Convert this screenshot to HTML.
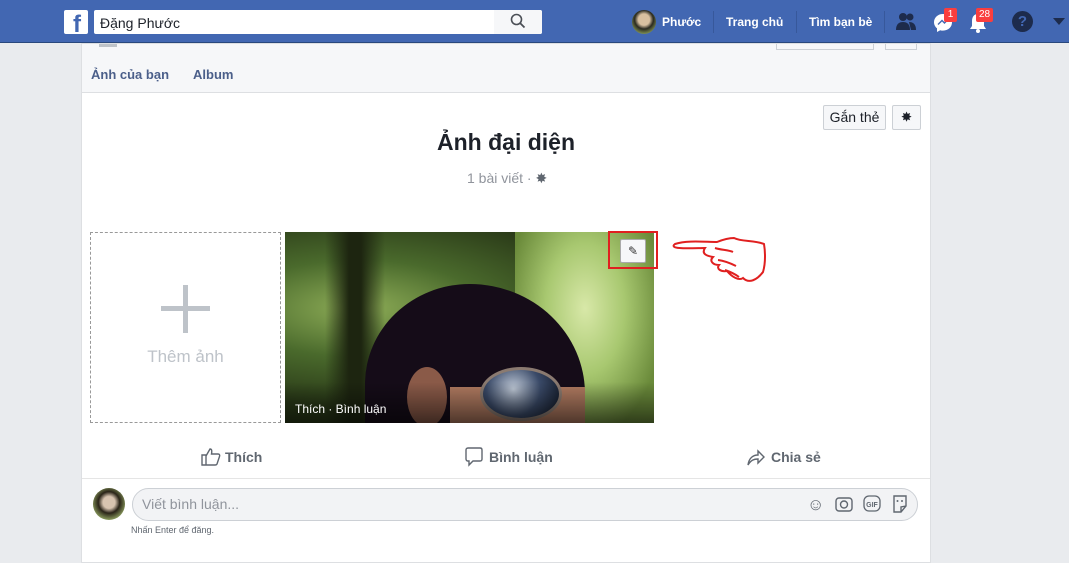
<!DOCTYPE html>
<html><head><meta charset="utf-8"><style>
*{box-sizing:border-box;margin:0;padding:0}
body{width:1069px;height:556px;overflow:hidden;background:#e9ebee;font-family:"Liberation Sans",Arial,sans-serif;position:relative}
.hdr{position:absolute;left:0;top:0;width:1069px;height:43px;background:#4267b2;border-bottom:1px solid #29487d}
.abs{position:absolute}
.nav{color:#fff;font-size:12px;font-weight:bold;top:15px}
.sep{width:1px;height:22px;background:#37589b;top:11px}
.card{position:absolute;left:81px;top:43px;width:850px;height:520px;background:#fff;border:1px solid #dddfe2}
.btn{position:absolute;border:1px solid #ccd0d5;border-radius:2px;background:#f6f7f9;font-size:13px;color:#1d2129;font-weight:bold}
</style></head><body>
<div class="hdr">
 <div class="abs" style="left:64px;top:10px;width:24px;height:24px;background:#fff;border-radius:2px"></div>
 <div class="abs" style="left:73px;top:13px;color:#4267b2;font-weight:bold;font-size:24px;line-height:24px">f</div>
 <div class="abs" style="left:94px;top:10px;width:448px;height:24px;background:#fff;border-radius:2px"></div>
 <div class="abs" style="left:494px;top:10px;width:48px;height:24px;background:#f6f7f9;border-radius:0 2px 2px 0"></div>
 <svg class="abs" style="left:510px;top:13px" width="16" height="16" viewBox="0 0 16 16"><circle cx="6.5" cy="6.5" r="5" fill="none" stroke="#4b4f56" stroke-width="1.6"/><path d="M10 10l4.5 4.5" stroke="#4b4f56" stroke-width="1.8"/></svg>
 <div class="abs" style="left:100px;top:15px;font-size:14px;color:#1d2129">Đặng Phước</div>
 <div class="abs" style="left:632px;top:10px;width:24px;height:24px;border-radius:50%;background:radial-gradient(circle at 50% 40%,#d8c0a0 0 30%,#2a2a20 50%,#7a8a50 75%)"></div>
 <div class="abs nav" style="left:662px">Phước</div>
 <div class="abs sep" style="left:713px"></div>
 <div class="abs nav" style="left:726px">Trang chủ</div>
 <div class="abs sep" style="left:796px"></div>
 <div class="abs nav" style="left:809px">Tìm bạn bè</div>
 <div class="abs sep" style="left:884px"></div>
 <svg class="abs" style="left:895px;top:12px" width="22" height="20" viewBox="0 0 22 20"><circle cx="8" cy="5" r="4" fill="#1d2b4c"/><path d="M1 18c0-6 3-8 7-8s7 2 7 8z" fill="#1d2b4c"/><circle cx="15" cy="5" r="3.5" fill="#1d2b4c"/><path d="M14 10c4 0 7 2 7 8h-5z" fill="#1d2b4c"/></svg>
 <svg class="abs" style="left:932px;top:12px" width="22" height="22" viewBox="0 0 22 22"><path d="M11 2C5.5 2 2 5.8 2 10.3c0 2.5 1.2 4.6 3 6V20l3.2-1.8c.9.3 1.8.4 2.8.4 5.5 0 9-3.8 9-8.3S16.5 2 11 2z" fill="#fff"/><path d="M6 12.5l4-4 2.5 2.5 4-4-4 4-2.5-2.5z" stroke="#4267b2" stroke-width="1.4" fill="none"/></svg>
 <div class="abs" style="left:944px;top:8px;width:13px;height:14px;background:#fa3e3e;border-radius:2px;color:#fff;font-size:10px;text-align:center;line-height:14px">1</div>
 <svg class="abs" style="left:968px;top:12px" width="20" height="22" viewBox="0 0 20 22"><path d="M10 2c-4 0-6 3-6 7v5l-2 3h16l-2-3V9c0-4-2-7-6-7z" fill="#fff"/><circle cx="10" cy="19" r="2" fill="#fff"/></svg>
 <div class="abs" style="left:976px;top:8px;width:17px;height:14px;background:#fa3e3e;border-radius:2px;color:#fff;font-size:10px;text-align:center;line-height:14px">28</div>
 <div class="abs" style="left:1012px;top:11px;width:21px;height:21px;border-radius:50%;background:#1d2b4c;color:#4267b2;font-weight:bold;font-size:15px;text-align:center;line-height:21px">?</div>
 <div class="abs" style="left:1053px;top:18px;width:0;height:0;border-left:6px solid transparent;border-right:6px solid transparent;border-top:7px solid #1d2b4c"></div>
</div>

<div class="card">
 <div class="abs" style="left:0;top:0;width:848px;height:49px;background:#f6f7f9;border-bottom:1px solid #dddfe2"></div>
 <div class="abs" style="left:17px;top:0;width:18px;height:3px;background:#bec3c9"></div>
 <div class="abs" style="left:694px;top:0;width:98px;height:6px;border:1px solid #ccd0d5;border-top:none;background:#f6f7f9"></div>
 <div class="abs" style="left:803px;top:0;width:32px;height:6px;border:1px solid #ccd0d5;border-top:none;background:#f6f7f9"></div>
 <div class="abs" style="left:9px;top:23px;font-size:13px;font-weight:bold;color:#4b5f8a">Ảnh của bạn</div>
 <div class="abs" style="left:111px;top:23px;font-size:13px;font-weight:bold;color:#4b5f8a">Album</div>

 <div class="btn" style="left:741px;top:61px;width:63px;height:25px;line-height:23px;text-align:center;font-weight:normal;font-size:14px">Gắn thẻ</div>
 <div class="btn" style="left:810px;top:61px;width:29px;height:25px;line-height:23px;text-align:center;font-size:12px">✸</div>
 <div class="abs" style="left:0;width:848px;top:85px;text-align:center;font-size:23px;font-weight:bold;color:#1d2129">Ảnh đại diện</div>
 <div class="abs" style="left:385px;top:126px;font-size:14px;color:#90949c">1 bài viết · <span style="color:#606770">✸</span></div>

 <div class="abs" style="left:8px;top:188px;width:191px;height:191px;border:1px dashed #999"></div>
 <div class="abs" style="left:101px;top:241px;width:5px;height:48px;background:#bec3c9"></div>
 <div class="abs" style="left:79px;top:262px;width:49px;height:5px;background:#bec3c9"></div>
 <div class="abs" style="left:8px;top:303px;width:191px;text-align:center;font-size:17px;color:#bec3c9">Thêm ảnh</div>

 <div class="abs" style="left:203px;top:188px;width:369px;height:191px;overflow:hidden;background:radial-gradient(ellipse at 20% 40%,#8fae58 0,#4a6a2c 30%,#2a3a18 60%),#3d5a22">
  <div class="abs" style="left:230px;top:0;width:140px;height:191px;background:radial-gradient(ellipse at 50% 40%,#d8e8a8 0,#a8c870 40%,#6a8a3a 80%)"></div>
  <div class="abs" style="left:40px;top:0;width:60px;height:191px;background:linear-gradient(90deg,transparent,#1d2510 40%,#1d2510 60%,transparent)"></div>
  <div class="abs" style="left:80px;top:52px;width:220px;height:210px;border-radius:50% 55% 30% 30%;background:#150c18"></div>
  <div class="abs" style="left:122px;top:135px;width:40px;height:60px;border-radius:50%;background:#8a5a48"></div>
  <div class="abs" style="left:165px;top:155px;width:135px;height:50px;background:#b07a60"></div>
  <div class="abs" style="left:195px;top:135px;width:82px;height:54px;border-radius:50%;background:radial-gradient(circle at 40% 40%,#c0cad8,#3a4a68 50%,#0e1420);border:3px solid #8a7a70"></div>
  <div class="abs" style="left:0;top:150px;width:369px;height:41px;background:linear-gradient(transparent,rgba(0,0,0,.55))"></div>
  <div class="abs" style="left:10px;top:170px;font-size:12px;color:#fff">Thích · Bình luận</div>
 </div>
 <div class="abs" style="left:526px;top:187px;width:50px;height:38px;border:2px solid #e02020"></div>
 <div class="abs" style="left:538px;top:195px;width:26px;height:24px;background:#f6f7f9;border:1px solid #aaa;border-radius:2px;text-align:center;line-height:22px;font-size:12px;color:#333">✎</div>
 <svg class="abs" style="left:588px;top:188px" width="100" height="52" viewBox="0 0 100 52"><path d="M5 12c-8 6 20 4 30 4c-4 6 2 8 8 9c-4 4 0 8 6 8c-3 4 2 7 8 6c5 6 12 10 16 7c6 6 14 2 20-6c3-10 2-22 1-28c-10-4-22-2-30-6c-6 0-12 2-17 4c-12 0-30-2-42 2z M45 16c6 2 14 2 18 4 M48 28c8 1 14 4 18 6 M55 38c6 2 10 4 14 7" fill="none" stroke="#e02020" stroke-width="2"/></svg>

 <svg class="abs" style="left:119px;top:403px" width="20" height="19" viewBox="0 0 20 19"><path d="M1 8h4v10H1z M5 9l4-7c2 0 2 2 1.5 5H17c1.5 0 2 1 1.5 2.5L16 17c-.3.7-1 1-2 1H5" fill="none" stroke="#606770" stroke-width="1.4"/></svg>
 <div class="abs" style="left:143px;top:405px;font-size:14px;font-weight:bold;color:#606770">Thích</div>
 <svg class="abs" style="left:383px;top:403px" width="18" height="20" viewBox="0 0 18 20"><path d="M3 1h12c1.2 0 2 .8 2 2v9c0 1.2-.8 2-2 2H8l-4 4v-4H3c-1.2 0-2-.8-2-2V3c0-1.2.8-2 2-2z" fill="none" stroke="#606770" stroke-width="1.4"/></svg>
 <div class="abs" style="left:407px;top:405px;font-size:14px;font-weight:bold;color:#606770">Bình luận</div>
 <svg class="abs" style="left:665px;top:404px" width="18" height="18" viewBox="0 0 18 18"><path d="M1 17c1-7 5-10 10-10V3l6 6-6 6v-4c-4 0-7 1-10 6z" fill="none" stroke="#606770" stroke-width="1.4"/></svg>
 <div class="abs" style="left:689px;top:405px;font-size:14px;font-weight:bold;color:#606770">Chia sẻ</div>
 <div class="abs" style="left:0;top:434px;width:848px;height:1px;background:#e5e5e5"></div>

 <div class="abs" style="left:11px;top:444px;width:32px;height:32px;border-radius:50%;background:radial-gradient(circle at 50% 45%,#d8c4b0 0 25%,#2a2418 45%,#8ea060 75%)"></div>
 <div class="abs" style="left:50px;top:444px;width:786px;height:33px;border:1px solid #ccd0d5;border-radius:17px;background:#f2f3f5"></div>
 <div class="abs" style="left:60px;top:452px;font-size:14px;color:#90949c">Viết bình luận...</div>
 <div class="abs" style="left:725px;top:451px;font-size:17px;color:#606770">☺</div>
 <svg class="abs" style="left:753px;top:451px" width="18" height="17" viewBox="0 0 18 17"><rect x="1" y="3" width="16" height="13" rx="3" fill="none" stroke="#606770" stroke-width="1.4"/><circle cx="9" cy="9.5" r="3.5" fill="none" stroke="#606770" stroke-width="1.4"/></svg>
 <svg class="abs" style="left:781px;top:451px" width="18" height="17" viewBox="0 0 18 17"><rect x="1" y="1" width="16" height="15" rx="5" fill="none" stroke="#606770" stroke-width="1.3"/><text x="9" y="12" font-size="7" font-family="Liberation Sans" font-weight="bold" text-anchor="middle" fill="#606770">GIF</text></svg>
 <svg class="abs" style="left:809px;top:450px" width="18" height="19" viewBox="0 0 18 19"><path d="M3 2h12v10l-5 6H3z M10 18v-5l5-1" fill="none" stroke="#606770" stroke-width="1.4"/><circle cx="6.5" cy="7" r="1" fill="#606770"/><circle cx="11" cy="7" r="1" fill="#606770"/></svg>
 <div class="abs" style="left:49px;top:481px;font-size:9px;color:#606770">Nhấn Enter để đăng.</div>
</div>
</body></html>
